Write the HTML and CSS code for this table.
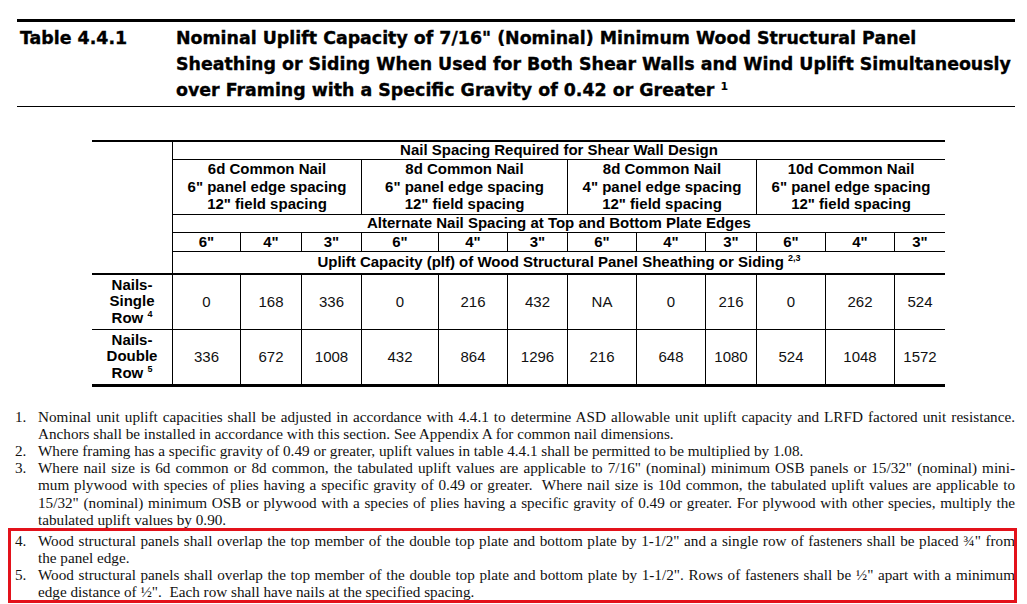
FILE: index.html
```html
<!DOCTYPE html>
<html>
<head>
<meta charset="utf-8">
<link rel="stylesheet" href="styles.css">
</head>
<body>
<div class="title">
  <div class="tnum">Table 4.4.1</div>
  <div class="ttext">Nominal Uplift Capacity of 7/16" (Nominal) Minimum Wood Structural Panel<br>Sheathing or Siding When Used for Both Shear Walls and Wind Uplift Simultaneously<br>over Framing with a Specific Gravity of 0.42 or Greater <sup>1</sup></div>
</div>

<div class="tbl">
  <div class="c corner"></div>
  <div class="c h s12"><span>Nail Spacing Required for Shear Wall Design</span></div>
  <div class="c h s3"><span>6d Common Nail<br>6" panel edge spacing<br>12" field spacing</span></div>
  <div class="c h s3"><span>8d Common Nail<br>6" panel edge spacing<br>12" field spacing</span></div>
  <div class="c h s3"><span>8d Common Nail<br>4" panel edge spacing<br>12" field spacing</span></div>
  <div class="c h s3"><span>10d Common Nail<br>6" panel edge spacing<br>12" field spacing</span></div>
  <div class="c h s12"><span>Alternate Nail Spacing at Top and Bottom Plate Edges</span></div>
  <div class="c h">6"</div><div class="c h">4"</div><div class="c h">3"</div>
  <div class="c h">6"</div><div class="c h">4"</div><div class="c h">3"</div>
  <div class="c h">6"</div><div class="c h">4"</div><div class="c h">3"</div>
  <div class="c h">6"</div><div class="c h">4"</div><div class="c h">3"</div>
  <div class="c h s12 up"><span>Uplift Capacity (plf) of Wood Structural Panel Sheathing or Siding <sup>2,3</sup></span></div>

  <div class="c lab"><span>Nails-<br>Single<br>Row <sup>4</sup></span></div>
  <div class="c d">0</div><div class="c d">168</div><div class="c d">336</div>
  <div class="c d">0</div><div class="c d">216</div><div class="c d">432</div>
  <div class="c d">NA</div><div class="c d">0</div><div class="c d">216</div>
  <div class="c d">0</div><div class="c d">262</div><div class="c d">524</div>

  <div class="c lab last"><span>Nails-<br>Double<br>Row <sup>5</sup></span></div>
  <div class="c d last">336</div><div class="c d last">672</div><div class="c d last">1008</div>
  <div class="c d last">432</div><div class="c d last">864</div><div class="c d last">1296</div>
  <div class="c d last">216</div><div class="c d last">648</div><div class="c d last">1080</div>
  <div class="c d last">524</div><div class="c d last">1048</div><div class="c d last">1572</div>
</div>

<div class="notes">
  <div class="note">
    <span class="num">1.</span>
    <div class="txt"><span class="ln j">Nominal unit uplift capacities shall be adjusted in accordance with 4.4.1 to determine ASD allowable unit uplift capacity and LRFD factored unit resistance.</span><span class="ln">Anchors shall be installed in accordance with this section. See Appendix A for common nail dimensions.</span></div>
  </div>
  <div class="note">
    <span class="num">2.</span>
    <div class="txt"><span class="ln">Where framing has a specific gravity of 0.49 or greater, uplift values in table 4.4.1 shall be permitted to be multiplied by 1.08.</span></div>
  </div>
  <div class="note">
    <span class="num">3.</span>
    <div class="txt"><span class="ln j">Where nail size is 6d common or 8d common, the tabulated uplift values are applicable to 7/16" (nominal) minimum OSB panels or 15/32" (nominal) mini-</span><span class="ln j">mum plywood with species of plies having a specific gravity of 0.49 or greater.&nbsp; Where nail size is 10d common, the tabulated uplift values are applicable to</span><span class="ln j">15/32" (nominal) minimum OSB or plywood with a species of plies having a specific gravity of 0.49 or greater. For plywood with other species, multiply the</span><span class="ln">tabulated uplift values by 0.90.</span></div>
  </div>
  <div class="boxed">
    <div class="note">
      <span class="num">4.</span>
      <div class="txt"><span class="ln j">Wood structural panels shall overlap the top member of the double top plate and bottom plate by 1-1/2" and a single row of fasteners shall be placed ¾" from</span><span class="ln">the panel edge.</span></div>
    </div>
    <div class="note">
      <span class="num">5.</span>
      <div class="txt"><span class="ln j">Wood structural panels shall overlap the top member of the double top plate and bottom plate by 1-1/2". Rows of fasteners shall be ½" apart with a minimum</span><span class="ln">edge distance of ½".&nbsp; Each row shall have nails at the specified spacing.</span></div>
    </div>
  </div>
</div>
</body>
</html>
```

FILE: styles.css
```css
html, body {
  margin: 0;
  padding: 0;
  background: #ffffff;
  color: #000000;
}

body {
  width: 1027px;
  height: 604px;
  overflow: hidden;
}

/* ---------- Title ---------- */
.title {
  box-sizing: border-box;
  margin: 19px 0 0 17px;
  width: 998px;
  padding: 3px 0 2px 3px;
  border-top: 3px solid #000;
  border-bottom: 1px solid #000;
  display: grid;
  grid-template-columns: 156px 1fr;
  font-family: "DejaVu Sans", Verdana, sans-serif;
  font-weight: bold;
  font-size: 17.4px;
  line-height: 26.2px;
  color: #000;
  -webkit-text-stroke: 0.35px #000;
}

.title sup {
  font-size: 11px;
  line-height: 0;
  vertical-align: 6px;
  -webkit-text-stroke: 0;
}

/* ---------- Table ---------- */
.tbl {
  margin: 33px 0 0 92px;
  width: 853px;
  display: grid;
  grid-template-columns: 80px 68px 61px 60px 77px 69px 60px 69px 69px 51px 69px 69px 51px;
  grid-template-rows: 18px 55px 18px 19px 23px 55px 57px;
  border-top: 2px solid #000;
  font-family: "Liberation Sans", Arial, sans-serif;
  font-size: 15px;
  color: #111;
}

.c {
  box-sizing: border-box;
  display: flex;
  align-items: center;
  justify-content: center;
  text-align: center;
  line-height: 17.5px;
}

.corner {
  grid-row: span 5;
  border-bottom: 2px solid #000;
}

.h {
  font-weight: bold;
  border-left: 1px solid #000;
  border-bottom: 1px solid #000;
  color: #000;
}

.s12 { grid-column: span 12; }
.s3 { grid-column: span 3; }

.up {
  border-bottom: 2px solid #000;
}

.c sup {
  font-size: 9px;
  line-height: 0;
  vertical-align: 6px;
}

.lab {
  font-weight: bold;
  line-height: 16.7px;
  border-bottom: 1px solid #000;
  color: #000;
}

.d {
  border-left: 1px solid #000;
  border-bottom: 1px solid #000;
}

.last {
  border-bottom: 3px solid #000;
}

/* ---------- Notes ---------- */
.notes {
  margin-top: 21.5px;
  font-family: "Liberation Serif", "Times New Roman", serif;
  font-size: 15.2px;
  line-height: 17.1px;
  color: #111;
}

.note {
  margin-left: 15px;
  width: 1000px;
  display: grid;
  grid-template-columns: 23px 977px;
}

.ln {
  display: block;
  white-space: nowrap;
}

.ln.j {
  text-align: justify;
  text-align-last: justify;
  white-space: normal;
}

.boxed {
  box-sizing: border-box;
  margin-left: 8px;
  width: 1009px;
  border: 3px solid #e3121b;
  padding: 1px 0 0 4px;
  overflow: hidden;
  line-height: 17px;
}

.boxed .note {
  margin-left: 0;
}
```
